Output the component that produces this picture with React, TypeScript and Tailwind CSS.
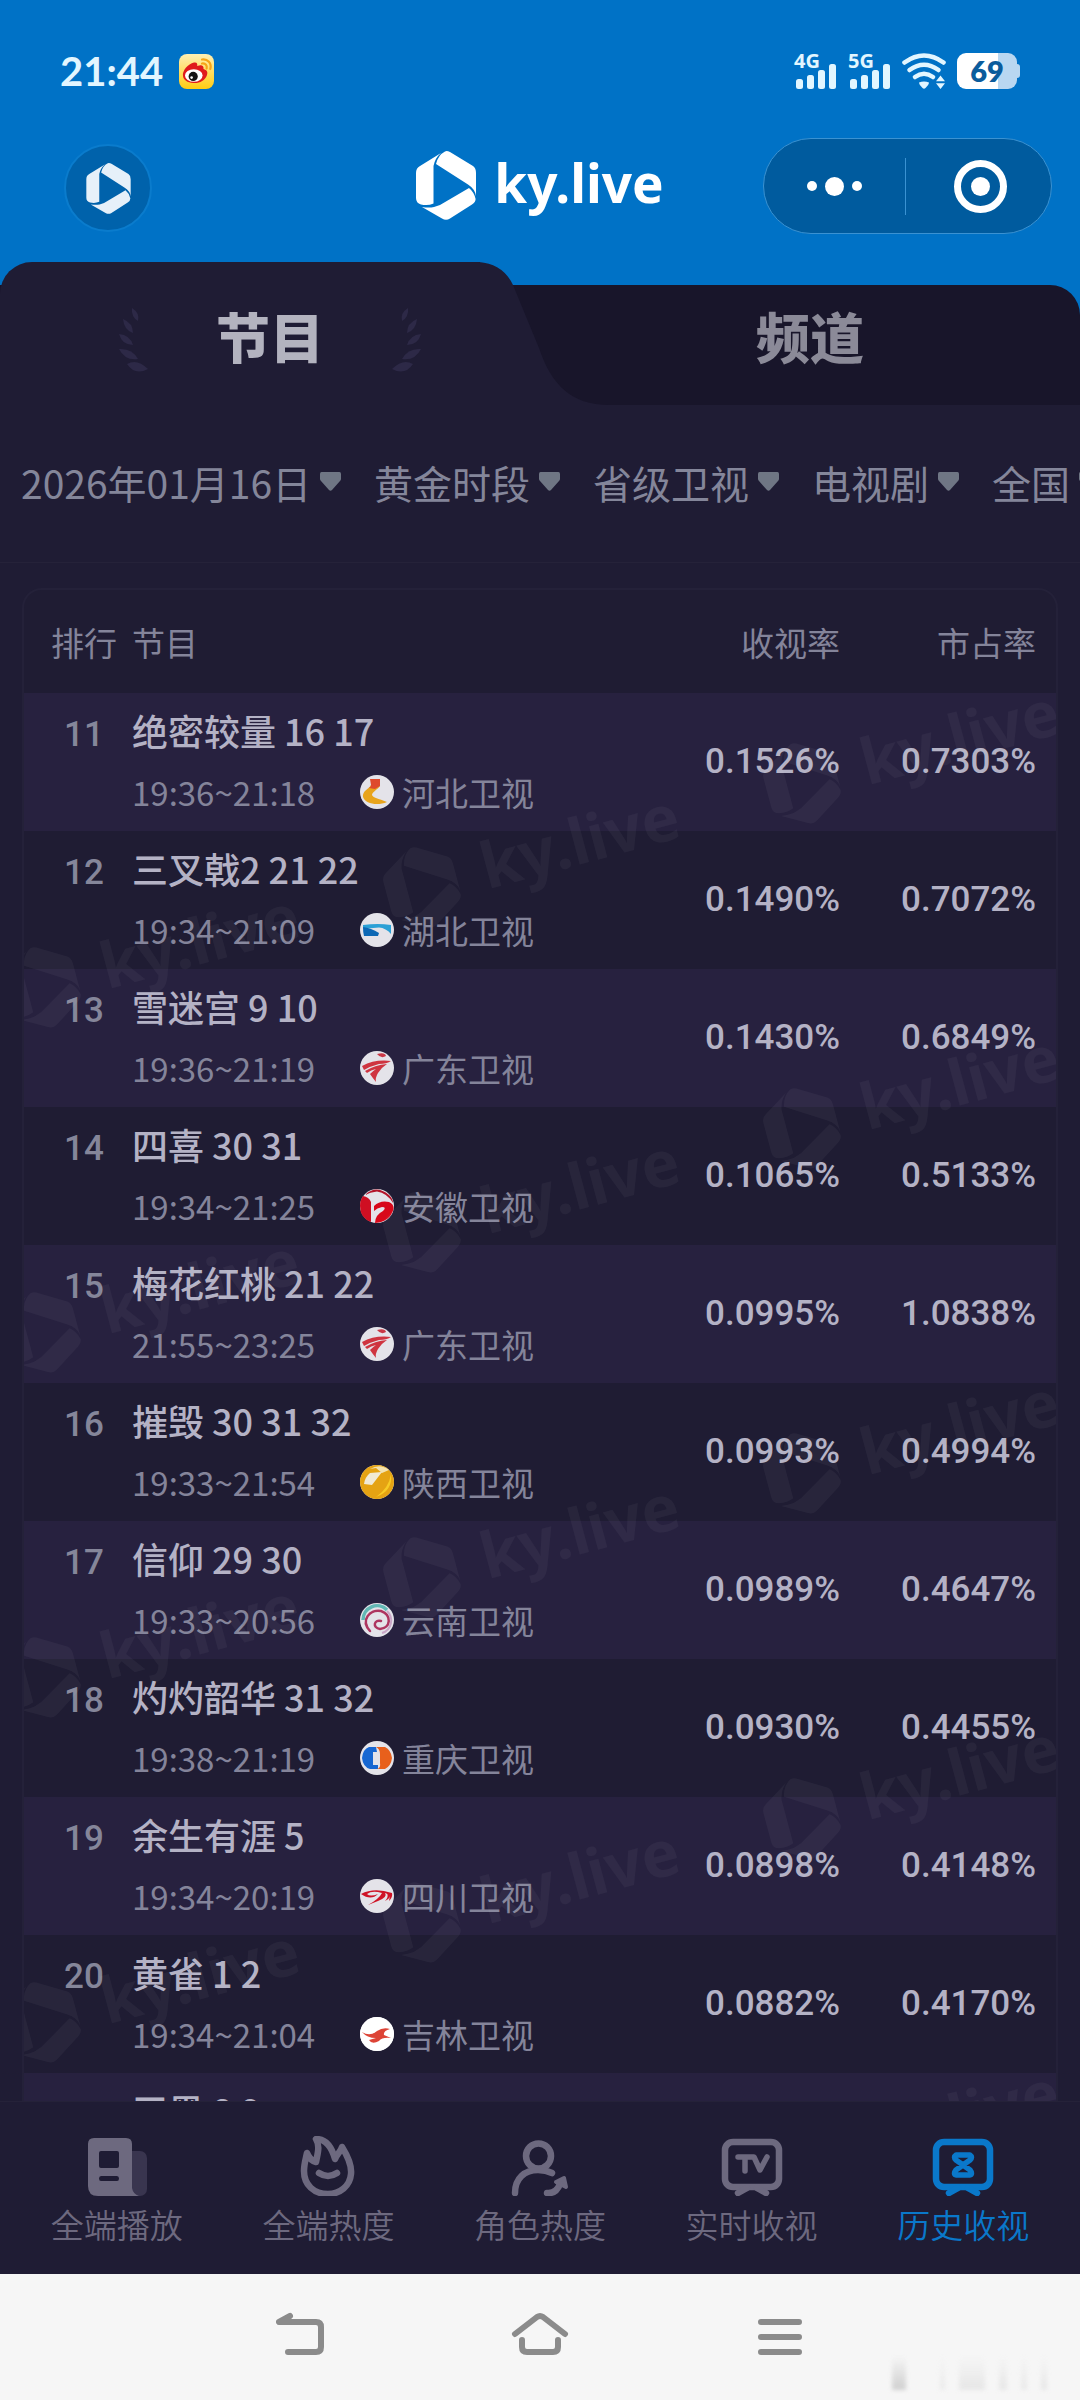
import React from "react";

type IconProps = { className?: string };

function KyMark({ className = "" }: IconProps) {
  return (
    <svg viewBox="0 0 60 69" fill="currentColor" className={className} aria-hidden="true">
      <KyMarkPaths />
    </svg>
  );
}

function KyMarkPaths() {
  return (
    <>
      <path d="M17.5 15 Q19 7 25 2 L4 15 Q0 17 0 22 V47 Q0 52 5 53.5 Q12 55 17.5 52.5 Z" />
      <path d="M20 13 Q22 4 29 .4 Q31 -.4 34 1 L57 15 Q60 17 60 22 V45 Q59 38 52 33.5 Z" />
      <path d="M53 37 Q58 41 59.6 48 Q59.6 51 56 53.5 L34 67.5 Q30 70 26 67.5 L6 56 Q13 57 18 56 Q21 55 24 54 Z" />
    </>
  );
}

function WeiboIcon() {
  return (
    <svg viewBox="0 0 35 35" className="size-[35px]" role="img" aria-label="微博">
      <defs>
        <linearGradient id="wb" x1="0" y1="0" x2="0" y2="1">
          <stop offset="0" stopColor="#fff0b4" />
          <stop offset="1" stopColor="#ffcc12" />
        </linearGradient>
      </defs>
      <rect width="35" height="35" rx="8" fill="url(#wb)" />
      <path d="M4 22 C3 17 9 10 15 8.6 C18 8 18.6 10 18.2 12 C22 10.500 25 11 24.500 15 C28 16 29 18 28 21 C26 27 20 29.500 14.500 29 C8 28.600 4.500 26 4 22Z" fill="#e01a1c" />
      <ellipse cx="14.800" cy="21.500" rx="8.800" ry="6.300" fill="#fff" />
      <circle cx="14.200" cy="22.400" r="4.600" fill="#151515" />
      <circle cx="12.600" cy="23.600" r="1.300" fill="#fff" />
      <path d="M23 9.500 C26.500 9 28.500 11.500 27.600 14.500 M23 5.500 C28.500 4.500 33 9.500 31.300 15" fill="none" stroke="#f6a417" strokeWidth="2.200" strokeLinecap="round" />
    </svg>
  );
}

function Signal({ label }: { label: string }) {
  return (
    <div className="relative h-[36px] w-[43px]">
      <span className="absolute -top-[2px] left-0 font-['Noto_Sans'] text-[20px] leading-[20px] font-bold text-[#e2f6ff]">{label}</span>
      <svg viewBox="0 0 43 36" className="h-[36px] w-[43px]" fill="#e2f6ff" aria-hidden="true">
        <rect x="2" y="26" width="7" height="10" rx="2.500" />
        <rect x="13" y="22" width="7" height="14" rx="2.500" />
        <rect x="24" y="17" width="7" height="19" rx="2.500" />
        <rect x="35" y="11" width="7" height="25" rx="2.500" />
      </svg>
    </div>
  );
}

function WifiIcon() {
  return (
    <svg viewBox="0 0 44 36" className="h-[36px] w-[44px]" aria-hidden="true">
      <g fill="none" stroke="#e2f6ff" strokeWidth="4.600" strokeLinecap="round">
        <path d="M2.500 9.500 Q22 -4.500 41.500 9.500" />
        <path d="M7.500 17 Q22 6.500 36.500 17" />
        <path d="M13 24 Q22 17.500 31 24" />
      </g>
      <path d="M17 29.500 Q22 27.500 27 29.500 Q27 31.500 23.500 35 Q22 36.500 20.500 35 Q17 31.500 17 29.500Z" fill="#e2f6ff" />
      <path d="M38.500 22.500 L43 28.300 H34Z M38.500 36 L43 30.200 H34Z" fill="#e2f6ff" />
    </svg>
  );
}

function Battery() {
  return (
    <div className="relative flex items-center">
      <div className="flex h-[36px] w-[60px] items-center justify-center rounded-[9px] bg-linear-to-r from-white from-68% to-[#b9d7f1] to-68%">
        <span className="font-['Lato'] text-[29px] leading-[36px] font-extrabold text-[#0b5c9c]">69</span>
      </div>
      <div className="h-[14px] w-[3px] rounded-r-[3px] bg-[#b9d7f1]" />
    </div>
  );
}

function Laurel({ className = "" }: IconProps) {
  return (
    <svg viewBox="0 0 30 66" fill="#2d2947" className={className} aria-hidden="true">
      <path d="M13 1 Q21 6 19 14 Q12 10 13 1Z" />
      <path d="M4 12 Q14 16 14 26 Q5 23 4 12Z" />
      <path d="M0 27 Q11 28 14 38 Q3 38 0 27Z" />
      <path d="M0 42 Q13 41 19 52 Q6 54 0 42Z" />
      <path d="M8 57 Q18 51 29 62 Q16 69 8 57Z" />
    </svg>
  );
}

const logos: Record<string, React.ReactNode> = {
  河北卫视: (
    <>
      <path d="M11 4 H20 V11 C17 15 12 17 12 20 C13 23 20 24 27 27 C18 31 5 29 3 22 C2 16 9 14 11 10Z" fill="#e8a41c" />
      <path d="M10 4 H20 V11 L15 14 L9 13 Q11 12 11 10Z" fill="#de4a2c" />
    </>
  ),
  湖北卫视: (
    <>
      <path d="M3 12 Q18 10 31 12 V21 Q26 15 19 14.500 Q10 15 3 16Z" fill="#2ba0d6" />
      <path d="M3 14 Q11 15 19 20 L18 23 H4 Q3 20 3 14Z" fill="#0c68b5" />
    </>
  ),
  广东卫视: (
    <>
      <path d="M17 3 Q25 1 26 5 Q21 8 17 3Z" fill="#c93846" />
      <path d="M2 15 Q15 8 31 10 Q27 13 19 13 Q11 15 4 19Z" fill="#cf3440" />
      <path d="M5 20 Q15 14 27 13 Q22 16 18 22 Q15 27 16 31 Q12 26 10 23 Q13 20 16 18 Q11 19 7 22Z" fill="#cf3440" />
    </>
  ),
  安徽卫视: (
    <>
      <path d="M3 7 Q9 8 11 13 V33 Q0 29 0 17 Q0 11 3 7Z" fill="#cf0f22" />
      <path d="M14 17 Q20 11 29 13 Q34 15 33.500 20 Q30 33 15 34 Q15 26 23 22 Q27 18 22 18 Q17 19 14 22Z" fill="#d8081a" />
      <path d="M5 6 Q16 -5 29 6 Q33 10 33 14 Q27 4 17 2.500 Q10 3 5 6Z" fill="#b3142a" />
    </>
  ),
  陕西卫视: (
    <>
      <circle cx="17" cy="17" r="17" fill="#e5a313" />
      <path d="M10 4 Q20 -2 29 5 L22 8 L16 3Z" fill="#f4e3b0" />
      <path d="M10 8 L22 7 L12 20 L4 19 Q5 12 10 8Z" fill="#f1ead5" />
      <path d="M31 9 Q33 26 16 32 Q29 23 31 9Z" fill="#f8cb25" />
    </>
  ),
  云南卫视: (
    <>
      <path d="M3 17 A14 14 0 0 1 27 7" fill="none" stroke="#62b7b4" strokeWidth="3.500" />
      <path d="M10 28 C0 17 10 6 21 8 C32 12 31 25 20 26 C12 25 14 16 21 18" fill="none" stroke="#ae3560" strokeWidth="2.500" strokeLinecap="round" />
      <path d="M27 8 A13 13 0 0 1 22 30" fill="none" stroke="#c9a6c7" strokeWidth="2" />
    </>
  ),
  重庆卫视: (
    <>
      <path d="M16 6 H9 Q3 8 2 17 Q3 26 10 28 H18 V24 H13 V11 H17Z" fill="#1767d2" />
      <path d="M16 6 H25 Q31 9 32 17 Q31 25 25 28 H17 Q21 27 20 22 V13 Q20 8 16 6Z" fill="#e8601c" />
    </>
  ),
  四川卫视: (
    <>
      <path d="M1 15 Q14 8 32 14 Q33 18 29 22 Q31 15 25 14 Q28 18 18 22 L8 26 Q19 20 22 14 Q12 11 7 15 Q10 18 18 15 Q11 22 1 15Z" fill="#cf1326" />
      <path d="M25 22 Q29 18 27 14 L30 14 Q31 19 25 22Z" fill="#cf1326" />
    </>
  ),
  吉林卫视: (
    <>
      <circle cx="17" cy="17" r="17" fill="#ffffff" />
      <path d="M2 15 Q10 20 17 14 Q23 10 30 12 Q23 14 24 18 L31 21 Q22 20 19 24 Q12 28 9 23 L16 21 Q7 21 2 15Z" fill="#dd4436" />
    </>
  ),
};

function ChannelLogo({ name }: { name: string }) {
  return (
    <svg viewBox="0 0 34 34" className="size-[34px] shrink-0" aria-hidden="true">
      <circle cx="17" cy="17" r="17" fill="#e4e3e9" />
      {logos[name]}
    </svg>
  );
}

const filters = ["2026年01月16日", "黄金时段", "省级卫视", "电视剧", "全国"];
const filterNames = ["日期", "时段", "频道类型", "节目类型", "地区"];

const rows = [
  { rank: 11, title: "绝密较量 16 17", time: "19:36~21:18", channel: "河北卫视", rate: "0.1526%", share: "0.7303%" },
  { rank: 12, title: "三叉戟2 21 22", time: "19:34~21:09", channel: "湖北卫视", rate: "0.1490%", share: "0.7072%" },
  { rank: 13, title: "雪迷宫 9 10", time: "19:36~21:19", channel: "广东卫视", rate: "0.1430%", share: "0.6849%" },
  { rank: 14, title: "四喜 30 31", time: "19:34~21:25", channel: "安徽卫视", rate: "0.1065%", share: "0.5133%" },
  { rank: 15, title: "梅花红桃 21 22", time: "21:55~23:25", channel: "广东卫视", rate: "0.0995%", share: "1.0838%" },
  { rank: 16, title: "摧毁 30 31 32", time: "19:33~21:54", channel: "陕西卫视", rate: "0.0993%", share: "0.4994%" },
  { rank: 17, title: "信仰 29 30", time: "19:33~20:56", channel: "云南卫视", rate: "0.0989%", share: "0.4647%" },
  { rank: 18, title: "灼灼韶华 31 32", time: "19:38~21:19", channel: "重庆卫视", rate: "0.0930%", share: "0.4455%" },
  { rank: 19, title: "余生有涯 5", time: "19:34~20:19", channel: "四川卫视", rate: "0.0898%", share: "0.4148%" },
  { rank: 20, title: "黄雀 1 2", time: "19:34~21:04", channel: "吉林卫视", rate: "0.0882%", share: "0.4170%" },
];

function Watermarks() {
  const marks = [0, 1, 2, 3, 4].flatMap((i) => [
    { x: 778, y: 90 + i * 345 },
    { x: 398, y: 194 + i * 345 },
    { x: 18, y: 294 + i * 345 },
  ]);
  return (
    <svg className="pointer-events-none absolute top-0 left-0 h-full w-full" aria-hidden="true">
      {marks.map((m) => (
        <g key={`${m.x}-${m.y}`} transform={`translate(${m.x} ${m.y}) rotate(-15) scale(1.2)`} fill="#ffffff" fillOpacity="0.045">
          <g transform="translate(-30 -34)">
            <KyMarkPaths />
          </g>
          <text x="52" y="16" fontFamily="Noto Sans" fontSize="53" fontWeight="700">
            ky.live
          </text>
        </g>
      ))}
    </svg>
  );
}

const iconBox = "size-[60px]";

function PlayIcon() {
  return (
    <svg viewBox="0 0 60 60" className={iconBox} aria-hidden="true">
      <rect x="38" y="15" width="22" height="45" rx="7" fill="#39354f" />
      <path fillRule="evenodd" fill="#6d697f" d="M7 2 H39 Q45 2 45 8 V52 Q46 58 52 60 H11 Q1 60 1 50 V8 Q1 2 7 2Z M14 15 Q12 15 12 17 V30 Q12 32 14 32 H30 Q32 32 32 30 V17 Q32 15 30 15Z M14 40 Q12 40 12 42.500 Q12 45 14 45 H30 Q32 45 32 42.500 Q32 40 30 40Z" />
    </svg>
  );
}

function FlameIcon() {
  return (
    <svg viewBox="0 0 60 60" className={iconBox} fill="none" stroke="#6d697f" strokeWidth="6.500" strokeLinecap="round" strokeLinejoin="round" aria-hidden="true">
      <path d="M18 26 C20 16 22 10 18 3 C28 3 34 12 37 23 C39 18 43 15 44 11 C49 19 54 28 53 38 C52 50 42 58 30 58 C16 58 6 49 6 35 C6 28 8 22 9 17 C11 22 14 25 18 26Z" />
      <path d="M21 37 Q30 43 39 37" />
    </svg>
  );
}

function RoleIcon() {
  return (
    <svg viewBox="0 0 60 60" className={iconBox} fill="none" stroke="#6d697f" strokeWidth="6.500" strokeLinecap="round" strokeLinejoin="round" aria-hidden="true">
      <circle cx="28.500" cy="20" r="12.500" />
      <path d="M5 57 C5 42 15 34 28 34 Q36 34 42 37" />
      <path d="M37 57 Q46 58 50 48" />
      <path d="M46 46 L54 42 L56 51Z" fill="#6d697f" strokeWidth="4" />
    </svg>
  );
}

function TvFrame() {
  return (
    <>
      <rect x="4" y="6" width="54" height="45" rx="8" strokeWidth="6.500" />
      <path d="M17 57 L26 52 M45 57 L36 52" strokeWidth="6.500" />
    </>
  );
}

function TvIcon() {
  return (
    <svg viewBox="0 0 62 60" className="h-[60px] w-[62px]" fill="none" stroke="#6d697f" strokeLinecap="round" strokeLinejoin="round" aria-hidden="true">
      <TvFrame />
      <path d="M17 21 H33 L39 34 L46 21 M24 22 V35" strokeWidth="5.500" />
    </svg>
  );
}

function HistoryIcon() {
  return (
    <svg viewBox="0 0 62 60" className="h-[60px] w-[62px]" fill="none" stroke="#0a78ca" strokeLinecap="round" strokeLinejoin="round" aria-hidden="true">
      <TvFrame />
      <path d="M24 19 H38 Q41 21 38 24 L24 34 Q21 38 24 39 H38 Q41 38 38 34 L24 24 Q21 21 24 19Z" strokeWidth="5.500" />
    </svg>
  );
}

const navItems = [
  { label: "全端播放", icon: <PlayIcon /> },
  { label: "全端热度", icon: <FlameIcon /> },
  { label: "角色热度", icon: <RoleIcon /> },
  { label: "实时收视", icon: <TvIcon /> },
  { label: "历史收视", icon: <HistoryIcon />, active: true },
];

export default function App() {
  return (
    <div className="flex h-screen flex-col overflow-hidden bg-[#1f1c34] font-['Noto_Sans_CJK_SC',sans-serif]">
      <header className="bg-[#0072c6] pt-[50px] text-white">
        <div className="flex h-[42px] items-center pr-[60px] pl-[60px]">
          <time className="font-['Lato'] text-[40px] leading-[42px] font-bold text-[#e2f6ff]">21:44</time>
          <div className="ml-[16px]">
            <WeiboIcon />
          </div>
          <div className="ml-auto flex items-center">
            <Signal label="4G" />
            <div className="ml-[11px]">
              <Signal label="5G" />
            </div>
            <div className="ml-[11px]">
              <WifiIcon />
            </div>
            <div className="ml-[11px]">
              <Battery />
            </div>
          </div>
        </div>

        <div className="mt-[46px] grid h-[96px] grid-cols-[1fr_auto_1fr] items-center">
          <div className="pt-[4px] pl-[64px]">
            <button type="button" aria-label="ky" className="flex size-[88px] items-center justify-center rounded-full border-2 border-[#0a7ccd] bg-[#0062ab] text-[#e6f0f9]">
              <KyMark className="h-[51px] w-[45px]" />
            </button>
          </div>
          <div className="flex items-center gap-[18px] pb-[2px]">
            <KyMark className="h-[69px] w-[60px]" />
            <h1 className="-mt-[4px] font-['Noto_Sans'] text-[53px] leading-[60px] font-bold">ky.live</h1>
          </div>
          <div className="flex justify-end pr-[28px]">
            <div className="flex h-[96px] w-[289px] items-center rounded-full border border-[#3a92d2] bg-[#005b9e]">
              <button type="button" aria-label="更多" className="flex h-full flex-1 items-center justify-center gap-[8px]">
                <span className="size-[10px] rounded-full bg-white" />
                <span className="size-[19px] rounded-full bg-white" />
                <span className="size-[10px] rounded-full bg-white" />
              </button>
              <span className="h-[57px] w-px bg-[#3a92d2]" />
              <button type="button" aria-label="关闭" className="flex h-full flex-1 items-center justify-center pl-[4px]">
                <span className="flex size-[53px] items-center justify-center rounded-full border-[7px] border-white">
                  <span className="size-[19px] rounded-full bg-white" />
                </span>
              </button>
            </div>
          </div>
        </div>

        <div className="relative mt-[28px] grid h-[143px] grid-cols-2">
          <div className="absolute inset-x-0 top-[23px] bottom-0 rounded-tr-[30px] bg-[#18152a]" />
          <button type="button" aria-pressed="true" className="relative flex items-center justify-center pt-[4px]">
            <span className="absolute top-0 right-[60px] bottom-0 left-0 rounded-tl-[32px] bg-[#1f1c34]" />
            <svg viewBox="0 0 130 143" className="absolute top-0 -right-[69px] h-[143px] w-[130px]" fill="#1f1c34" aria-hidden="true">
              <path d="M0 0 Q24 2 34 23 L60 86 C72 122 92 143 130 143 H0Z" />
            </svg>
            <span className="relative flex items-center gap-[67px]">
              <Laurel className="mt-[8px] h-[66px] w-[30px]" />
              <span className="text-[54px] leading-[60px] font-black text-[#b3b3bf]">节目</span>
              <Laurel className="mt-[8px] h-[66px] w-[30px] -scale-x-100" />
            </span>
          </button>
          <button type="button" aria-pressed="false" className="relative flex items-center justify-center pt-[4px] text-[54px] leading-[60px] font-black text-[#8b8a98]">
            频道
          </button>
        </div>
      </header>

      <div className="flex h-[158px] shrink-0 items-center gap-[33px] overflow-hidden border-b border-[#252239] pb-[4px] pl-[21px]">
        {filters.map((f, i) => (
          <label key={f} className="flex shrink-0 items-center gap-[8px]">
            <select aria-label={filterNames[i]} className="appearance-none bg-transparent text-[39px] leading-[60px] text-[#84869a]">
              <option>{f}</option>
            </select>
            <svg viewBox="0 0 21 19" className="h-[19px] w-[21px]" fill="#6f7684" aria-hidden="true">
              <path d="M1.500 0 H19.500 Q21 0 21 2 V7 Q21 8 20 9 L12 18 Q10.500 19.500 9 18 L1 9 Q0 8 0 7 V2 Q0 0 1.500 0Z" />
            </svg>
          </label>
        ))}
      </div>

      <main className="min-h-0 flex-1 overflow-hidden px-[22px] pt-[25px]">
        <div className="rounded-t-[20px] border-2 border-[#242139] bg-[#1f1c33]">
          <div className="relative overflow-hidden">
            <table className="w-full table-fixed border-collapse">
              <colgroup>
                <col className="w-[108px]" />
                <col />
                <col className="w-[220px]" />
                <col className="w-[216px]" />
              </colgroup>
              <thead>
                <tr className="h-[103px] text-[33px] leading-[48px] text-[#84849a]">
                  <th className="pl-[12px] text-center font-normal">排行</th>
                  <th className="text-left font-normal">节目</th>
                  <th className="text-right font-normal">收视率</th>
                  <th className="pr-[20px] text-right font-normal">市占率</th>
                </tr>
              </thead>
              <tbody>
                {rows.map((r) => (
                  <tr key={r.rank} className="h-[138px] odd:bg-[#27213f]">
                    <td className="pt-[17px] pl-[12px] text-center align-top font-['Roboto'] text-[35px] leading-[50px] font-medium text-[#85869a]">{r.rank}</td>
                    <td className="pt-[12px] align-top">
                      <div className="text-[36px] leading-[50px] font-medium whitespace-nowrap text-[#b4b2c5]">{r.title}</div>
                      <div className="mt-[12px] flex items-center text-[33px] leading-[50px] whitespace-nowrap text-[#84849a]">
                        <span className="w-[228px]">{r.time}</span>
                        <ChannelLogo name={r.channel} />
                        <span className="ml-[8px]">{r.channel}</span>
                      </div>
                    </td>
                    <td className="text-right font-['Roboto'] text-[35px] leading-[50px] font-medium text-[#b4b2c5]">{r.rate}</td>
                    <td className="pr-[20px] text-right font-['Roboto'] text-[35px] leading-[50px] font-medium text-[#b4b2c5]">{r.share}</td>
                  </tr>
                ))}
                <tr className="h-[138px] odd:bg-[#27213f]">
                  <td />
                  <td className="pt-[12px] align-top text-[36px] leading-[50px] font-medium text-[#b4b2c5]">天黑 8 9</td>
                  <td />
                  <td />
                </tr>
              </tbody>
            </table>
            <div className="pointer-events-none absolute inset-x-0 top-[103px] bottom-0 overflow-hidden">
              <Watermarks />
            </div>
          </div>
        </div>
      </main>

      <nav className="flex h-[173px] shrink-0 border-t border-[#252239] bg-[#1f1c34] px-[11px] pt-[34px]">
        {navItems.map((n) => (
          <a key={n.label} href="#" aria-current={n.active ? "page" : undefined} className={`flex flex-1 flex-col items-center text-[33px] leading-[48px] font-[350] ${n.active ? "text-[#0a78ca]" : "text-[#6d697f]"}`}>
            {n.icon}
            <span className="mt-[4px]">{n.label}</span>
          </a>
        ))}
      </nav>

      <footer className="relative grid h-[126px] shrink-0 grid-cols-3 bg-[#f6f6f6] px-[180px] pt-[38px]">
        <button type="button" aria-label="返回" className="flex items-start justify-center">
          <svg viewBox="0 0 48 44" className="h-[44px] w-[48px]" fill="none" stroke="#8b8b8b" strokeWidth="6" strokeLinecap="round" strokeLinejoin="round" aria-hidden="true">
            <path d="M14 4 L3 10 H40 Q45 10 45 15 V35 Q45 40 40 40 H12" />
          </svg>
        </button>
        <button type="button" aria-label="主页" className="flex items-start justify-center">
          <svg viewBox="0 0 58 44" className="h-[44px] w-[58px]" fill="none" stroke="#8b8b8b" strokeWidth="6" strokeLinecap="round" strokeLinejoin="round" aria-hidden="true">
            <path d="M4 22 L26 5 Q29 3 32 5 L54 22 M11 28 V35 Q11 40 16 40 H42 Q47 40 47 35 V28" />
          </svg>
        </button>
        <button type="button" aria-label="菜单" className="flex items-start justify-center">
          <svg viewBox="0 0 46 44" className="h-[44px] w-[46px]" stroke="#8b8b8b" strokeWidth="6" strokeLinecap="round" aria-hidden="true">
            <path d="M4 10 H42 M4 25 H42 M4 40 H42" />
          </svg>
        </button>
        <div className="absolute right-[12px] bottom-[10px] flex h-[34px] w-[176px] items-stretch gap-[14px] opacity-60 blur-[2px]">
          <span className="w-[14px] bg-linear-to-b from-transparent to-[#b5b5b5]" />
          <span className="ml-[20px] w-[5px] bg-linear-to-b from-transparent to-[#e2e2e2]" />
          <span className="w-[26px] bg-linear-to-b from-transparent to-[#dcdcdc]" />
          <span className="w-[8px] bg-linear-to-b from-transparent to-[#dcdcdc]" />
          <span className="w-[6px] bg-linear-to-b from-transparent to-[#e0e0e0]" />
          <span className="w-[6px] bg-linear-to-b from-transparent to-[#dcdcdc]" />
        </div>
      </footer>
    </div>
  );
}
